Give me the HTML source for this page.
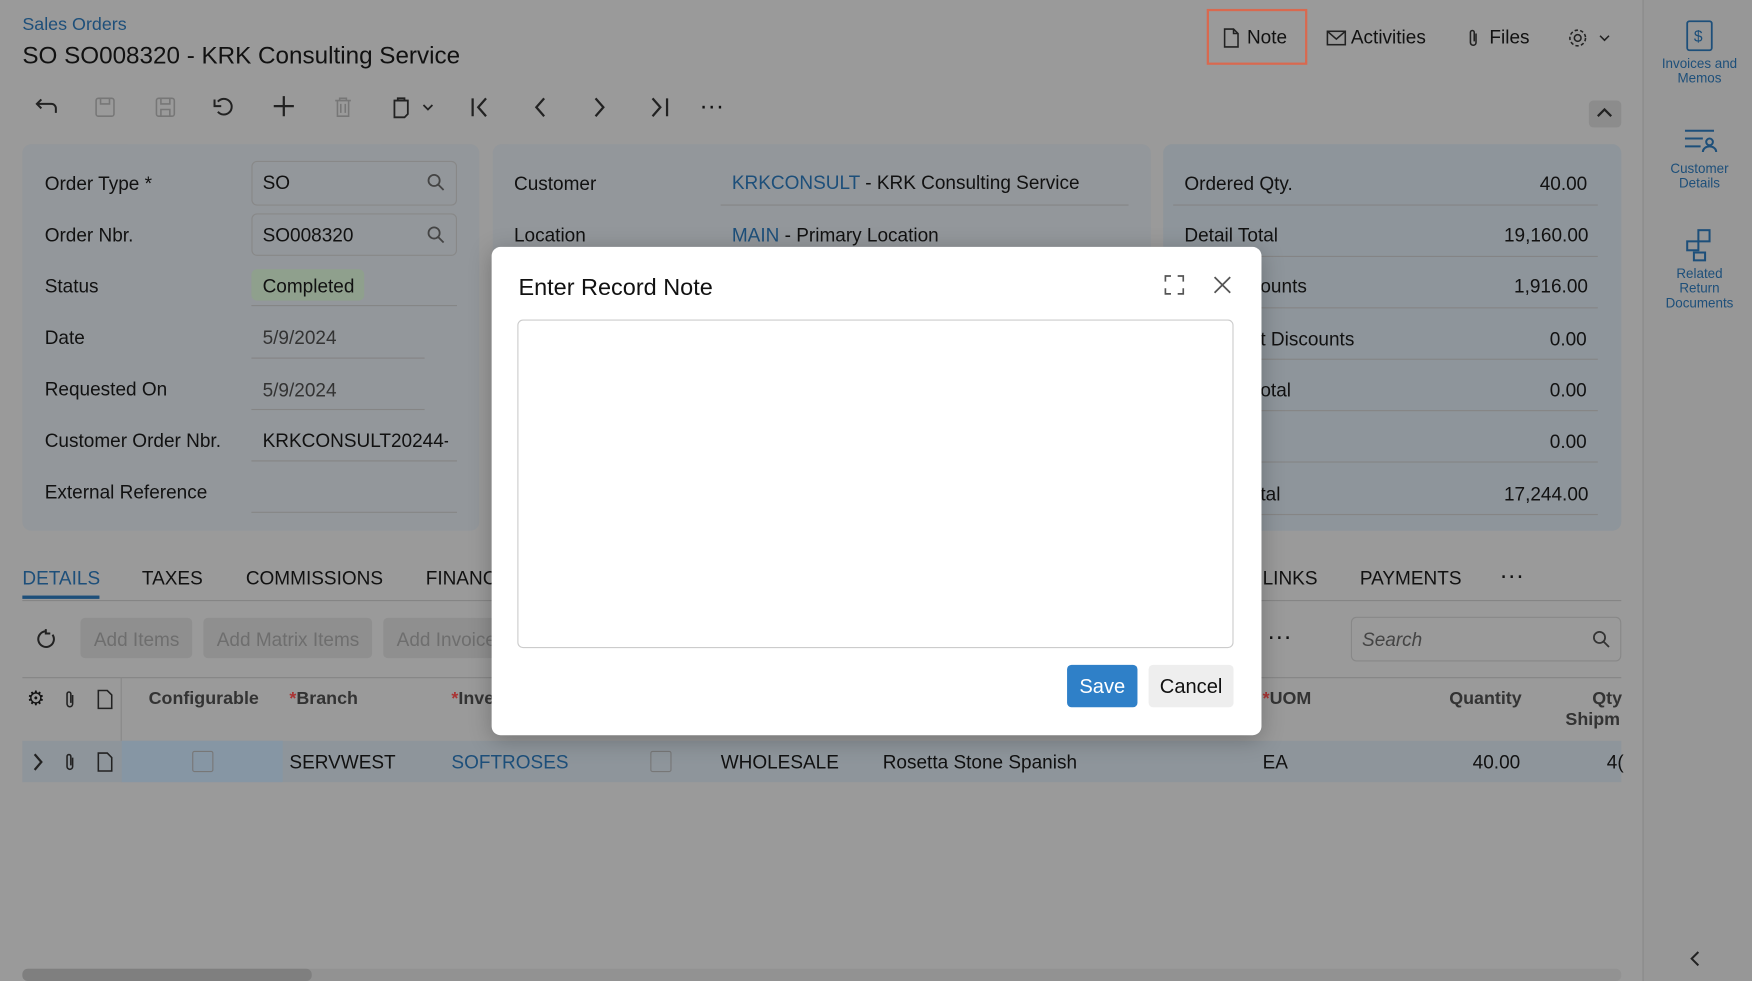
<!DOCTYPE html>
<html><head><meta charset="utf-8"><style>
*{box-sizing:border-box;margin:0;padding:0}
html,body{width:1752px;height:981px;overflow:hidden;background:#9a9a9a}
#w{position:absolute;left:0;top:0;width:1568px;height:878px;transform:scale(1.11735);transform-origin:0 0;font-family:"Liberation Sans",sans-serif;color:#111;font-size:17px}
.a{position:absolute;white-space:nowrap}
.link{color:#1d4f7a}
.panel{position:absolute;background:#93979b;border-radius:8px}
.line{position:absolute;height:1px;background:#858585}
.in{position:absolute;border:1px solid #888;border-radius:5px}
.g{color:#7e7e7e}
svg{position:absolute}
</style></head><body><div id="w">
<div class="a link" style="left:20px;top:14px;font-size:16px">Sales Orders</div>
<div class="a" style="left:20px;top:37px;font-size:21.7px">SO SO008320 - KRK Consulting Service</div>
<div class="a" style="left:1080px;top:8px;width:90px;height:50px;border:2px solid #d9694f"></div>
<div class="a" style="left:1116px;top:24px">Note</div>
<div class="a" style="left:1209px;top:24px">Activities</div>
<div class="a" style="left:1333px;top:24px">Files</div>
<svg style="left:1094px;top:25px" width="16" height="18" viewBox="0 0 16 18" fill="none" stroke="#222" stroke-width="1.4"><path d="M2 1h8l4 4v12H2z M10 1v4h4"/></svg>
<svg style="left:1187px;top:27px" width="18" height="14" fill="none" stroke="#222" stroke-width="1.4"><rect x="1" y="1" width="16" height="12"/><path d="M1 1l8 7 8-7"/></svg>
<svg style="left:1313px;top:25px" width="12" height="18" fill="none" stroke="#222" stroke-width="1.4"><path d="M8 5v8a2.5 2.5 0 0 1-5 0V4a1.7 1.7 0 0 1 3.4 0v8"/></svg>
<svg style="left:1404px;top:25px" width="40" height="18" fill="none" stroke="#222" stroke-width="1.4"><circle cx="8" cy="9" r="3"/><circle cx="8" cy="9" r="7" stroke-dasharray="3 2"/><path d="M28 7l4 4 4-4"/></svg>
<!-- toolbar -->
<svg style="left:31px;top:87px" width="22" height="16" fill="none" stroke="#222" stroke-width="1.8"><path d="M6 2L2 6l4 4M2 6h13a4 4 0 0 1 4 4v4"/></svg>
<svg style="left:84px;top:86px" width="20" height="20" fill="none" stroke="#777" stroke-width="1.4"><rect x="2" y="2" width="16" height="16" rx="2"/><path d="M6 2v5h8V2"/></svg>
<svg style="left:138px;top:86px" width="20" height="20" fill="none" stroke="#777" stroke-width="1.4"><rect x="2" y="2" width="16" height="16" rx="2"/><path d="M6 2v5h8V2M6 18v-6h8v6"/></svg>
<svg style="left:190px;top:85px" width="22" height="20" fill="none" stroke="#222" stroke-width="1.8"><path d="M5 15a7 7 0 1 0 0-9M2 4v6h6"/></svg>
<svg style="left:244px;top:85px" width="20" height="20" stroke="#222" stroke-width="2"><path d="M10 1v18M1 10h18"/></svg>
<svg style="left:298px;top:86px" width="18" height="20" fill="none" stroke="#777" stroke-width="1.4"><path d="M2 4h14M6 4V2h6v2M4 4v14h10V4M7 7v8M11 7v8"/></svg>
<svg style="left:350px;top:86px" width="40" height="20" fill="none" stroke="#222" stroke-width="1.6"><path d="M3 4h12v12l-3 3H3z M6 4V2h6v2"/><path d="M29 8l4 4 4-4"/></svg>
<svg style="left:420px;top:86px" width="20" height="20" fill="none" stroke="#222" stroke-width="2"><path d="M3 2v16M15 2l-7 8 7 8"/></svg>
<svg style="left:474px;top:86px" width="20" height="20" fill="none" stroke="#222" stroke-width="2"><path d="M13 2l-7 8 7 8"/></svg>
<svg style="left:527px;top:86px" width="20" height="20" fill="none" stroke="#222" stroke-width="2"><path d="M6 2l7 8-7 8"/></svg>
<svg style="left:580px;top:86px" width="20" height="20" fill="none" stroke="#222" stroke-width="2"><path d="M17 2v16M4 2l7 8-7 8"/></svg>
<div class="a" style="left:626px;top:82px;font-size:22px">···</div>
<div class="a" style="left:1422px;top:90px;width:29px;height:24px;background:#8c8c8c;border-radius:4px"></div>
<svg style="left:1429px;top:96px" width="14" height="10" fill="none" stroke="#222" stroke-width="2"><path d="M1 8l6-6 6 6"/></svg>
<!-- panels -->
<div class="panel" style="left:20px;top:129px;width:409px;height:346px"></div>
<div class="panel" style="left:441px;top:129px;width:589px;height:346px"></div>
<div class="panel" style="left:1041px;top:129px;width:410px;height:346px;background:#8e959b"></div>
<div class="a" style="left:40px;top:155px">Order Type *</div>
<div class="a" style="left:40px;top:201px">Order Nbr.</div>
<div class="a" style="left:40px;top:247px">Status</div>
<div class="a" style="left:40px;top:293px">Date</div>
<div class="a" style="left:40px;top:339px">Requested On</div>
<div class="a" style="left:40px;top:385px">Customer Order Nbr.</div>
<div class="a" style="left:40px;top:431px">External Reference</div>
<div class="in" style="left:225px;top:144px;width:184px;height:40px"></div>
<div class="in" style="left:225px;top:191px;width:184px;height:38px"></div>
<div class="a" style="left:235px;top:154px">SO</div>
<div class="a" style="left:235px;top:201px">SO008320</div>
<svg style="left:382px;top:155px" width="16" height="16" fill="none" stroke="#444" stroke-width="1.6"><circle cx="6.5" cy="6.5" r="5"/><path d="M10 10l5 5"/></svg>
<svg style="left:382px;top:202px" width="16" height="16" fill="none" stroke="#444" stroke-width="1.6"><circle cx="6.5" cy="6.5" r="5"/><path d="M10 10l5 5"/></svg>
<div class="a" style="left:225px;top:241px;width:101px;height:28px;background:#8fa08d;border-radius:5px"></div>
<div class="a" style="left:235px;top:247px">Completed</div>
<div class="line" style="left:225px;top:273px;width:184px"></div>
<div class="a" style="left:235px;top:293px;color:#333">5/9/2024</div>
<div class="line" style="left:225px;top:320px;width:155px"></div>
<div class="a" style="left:235px;top:340px;color:#333">5/9/2024</div>
<div class="line" style="left:225px;top:366px;width:155px"></div>
<div class="a" style="left:235px;top:385px;width:166px;overflow:hidden">KRKCONSULT20244-</div>
<div class="line" style="left:225px;top:412px;width:184px"></div>
<div class="line" style="left:225px;top:458px;width:184px"></div>
<div class="a" style="left:460px;top:155px">Customer</div>
<div class="a" style="left:460px;top:201px">Location</div>
<div class="a" style="left:655px;top:154px"><span class="link">KRKCONSULT</span> - KRK Consulting Service</div>
<div class="a" style="left:655px;top:201px"><span class="link">MAIN</span> - Primary Location</div>
<div class="line" style="left:645px;top:183px;width:365px"></div>
<div class="a" style="left:1060px;top:155px">Ordered Qty.</div><div class="a" style="left:1378px;top:155px">40.00</div>
<div class="a" style="left:1060px;top:201px">Detail Total</div><div class="a" style="left:1346px;top:201px">19,160.00</div>
<div class="a" style="left:1128px;top:247px">ounts</div><div class="a" style="left:1355px;top:247px">1,916.00</div>
<div class="a" style="left:1128px;top:294px">t Discounts</div><div class="a" style="left:1387px;top:294px">0.00</div>
<div class="a" style="left:1128px;top:340px">otal</div><div class="a" style="left:1387px;top:340px">0.00</div>
<div class="a" style="left:1387px;top:386px">0.00</div>
<div class="a" style="left:1128px;top:433px">tal</div><div class="a" style="left:1346px;top:433px">17,244.00</div>
<div class="line" style="left:1050px;top:183px;width:380px"></div><div class="line" style="left:1050px;top:229px;width:380px"></div>
<div class="line" style="left:1128px;top:275px;width:302px"></div><div class="line" style="left:1128px;top:321px;width:302px"></div>
<div class="line" style="left:1128px;top:367px;width:302px"></div><div class="line" style="left:1128px;top:413px;width:302px"></div><div class="line" style="left:1128px;top:460px;width:302px"></div>
<!-- tabs -->
<div class="a link" style="left:20px;top:508px">DETAILS</div>
<div class="a" style="left:20px;top:533px;width:69px;height:3px;background:#1d4f7a"></div>
<div class="a" style="left:127px;top:508px">TAXES</div>
<div class="a" style="left:220px;top:508px">COMMISSIONS</div>
<div class="a" style="left:381px;top:508px">FINANC</div>
<div class="a" style="left:1130px;top:508px">LINKS</div>
<div class="a" style="left:1217px;top:508px">PAYMENTS</div>
<div class="a" style="left:1342px;top:502px;font-size:22px">···</div>
<div class="line" style="left:20px;top:537px;width:1431px"></div>
<svg style="left:32px;top:562px" width="20" height="20" fill="none" stroke="#222" stroke-width="1.8"><path d="M15 6a7 7 0 1 1-6-3M9 1v4h4"/></svg>
<div class="a" style="left:72px;top:553px;width:100px;height:36px;background:#8f8f8f;border-radius:4px"></div>
<div class="a" style="left:182px;top:553px;width:151px;height:36px;background:#8f8f8f;border-radius:4px"></div>
<div class="a" style="left:343px;top:553px;width:100px;height:36px;background:#8f8f8f;border-radius:4px"></div>
<div class="a" style="left:84px;top:563px;color:#6e6e6e">Add Items</div>
<div class="a" style="left:194px;top:563px;color:#6e6e6e">Add Matrix Items</div>
<div class="a" style="left:355px;top:563px;color:#6e6e6e">Add Invoice</div>
<div class="a" style="left:1134px;top:557px;font-size:22px">···</div>
<div class="in" style="left:1209px;top:552px;width:242px;height:40px"></div>
<div class="a" style="left:1219px;top:563px;font-style:italic;color:#444">Search</div>
<svg style="left:1425px;top:564px" width="16" height="16" fill="none" stroke="#333" stroke-width="1.6"><circle cx="6.5" cy="6.5" r="5"/><path d="M10 10l5 5"/></svg>
<!-- grid -->
<div class="line" style="left:20px;top:606px;width:1431px"></div>
<div class="a" style="left:24px;top:615px;font-size:18px">⚙</div>
<svg style="left:57px;top:617px" width="12" height="18" fill="none" stroke="#222" stroke-width="1.4"><path d="M8 5v8a2.5 2.5 0 0 1-5 0V4a1.7 1.7 0 0 1 3.4 0v8"/></svg>
<svg style="left:86px;top:617px" width="16" height="18" fill="none" stroke="#222" stroke-width="1.4"><path d="M2 1h8l4 4v12H2z"/></svg>
<div class="a" style="left:108px;top:606px;width:1px;height:94px;background:#888"></div>
<div class="a" style="left:133px;top:617px;color:#333;font-weight:bold;font-size:16px">Configurable</div>
<div class="a" style="left:259px;top:617px;color:#333;font-weight:bold;font-size:16px"><span style="color:#a33">*</span>Branch</div>
<div class="a" style="left:404px;top:617px;color:#333;font-weight:bold;font-size:16px"><span style="color:#a33">*</span>Inve</div>
<div class="a" style="left:1130px;top:617px;color:#333;font-weight:bold;font-size:16px"><span style="color:#a33">*</span>UOM</div>
<div class="a" style="left:1297px;top:617px;color:#333;font-weight:bold;font-size:16px">Quantity</div>
<div class="a" style="left:1425px;top:617px;color:#333;font-weight:bold;font-size:16px">Qty</div>
<div class="a" style="left:1401px;top:636px;color:#333;font-weight:bold;font-size:16px">Shipm</div>
<div class="a" style="left:20px;top:663px;width:1431px;height:37px;background:#8e959b"></div>
<div class="a" style="left:109px;top:663px;width:144px;height:37px;background:#8696a4"></div>
<svg style="left:28px;top:673px" width="12" height="18" fill="none" stroke="#222" stroke-width="2"><path d="M3 2l6 7-6 7"/></svg>
<svg style="left:57px;top:673px" width="12" height="18" fill="none" stroke="#222" stroke-width="1.4"><path d="M8 5v8a2.5 2.5 0 0 1-5 0V4a1.7 1.7 0 0 1 3.4 0v8"/></svg>
<svg style="left:86px;top:673px" width="16" height="18" fill="none" stroke="#222" stroke-width="1.4"><path d="M2 1h8l4 4v12H2z"/></svg>
<div class="a" style="left:172px;top:672px;width:19px;height:19px;border:1px solid #777;border-radius:2px"></div>
<div class="a" style="left:582px;top:672px;width:19px;height:19px;border:1px solid #777;border-radius:2px"></div>
<div class="a" style="left:259px;top:673px">SERVWEST</div>
<div class="a link" style="left:404px;top:673px">SOFTROSES</div>
<div class="a" style="left:645px;top:673px">WHOLESALE</div>
<div class="a" style="left:790px;top:673px">Rosetta Stone Spanish</div>
<div class="a" style="left:1130px;top:673px">EA</div>
<div class="a" style="left:1318px;top:673px">40.00</div>
<div class="a" style="left:1438px;top:673px">4(</div>
<div class="a" style="left:20px;top:867px;width:1431px;height:11px;background:#929292;border-radius:5px"></div>
<div class="a" style="left:20px;top:867px;width:259px;height:11px;background:#7f7f7f;border-radius:5px"></div>
<!-- right sidebar -->
<div class="a" style="left:1470px;top:0;width:98px;height:878px;background:#979797;border-left:1px solid #888"></div>
<svg style="left:1508px;top:18px" width="26" height="28" fill="none" stroke="#1d4f7a" stroke-width="1.6"><rect x="2" y="1" width="22" height="26" rx="2"/><text x="8" y="19" font-size="14" fill="#1d4f7a" stroke="none" font-family="Liberation Sans">$</text></svg>
<div class="a link" style="left:1480px;top:51px;width:82px;text-align:center;font-size:12px;white-space:normal;line-height:13px">Invoices and Memos</div>
<svg style="left:1507px;top:115px" width="30" height="22" stroke="#1d4f7a" stroke-width="1.8" fill="none"><path d="M1 2h26M1 9h16M1 16h14"/><circle cx="23" cy="12" r="3"/><path d="M17 21a6 5 0 0 1 12 0"/></svg>
<div class="a link" style="left:1480px;top:145px;width:82px;text-align:center;font-size:12px;white-space:normal;line-height:13px">Customer Details</div>
<svg style="left:1508px;top:204px" width="28" height="30" fill="none" stroke="#1d4f7a" stroke-width="1.8"><rect x="12" y="2" width="10" height="10"/><rect x="2" y="12" width="10" height="8"/><rect x="8" y="22" width="10" height="7"/></svg>
<div class="a link" style="left:1488px;top:239px;width:66px;text-align:center;font-size:12px;white-space:normal;line-height:13px">Related Return Documents</div>
<svg style="left:1511px;top:850px" width="12" height="16" fill="none" stroke="#222" stroke-width="1.8"><path d="M9 2l-6 6 6 6"/></svg>
<!-- dialog -->
<div class="a" style="left:440px;top:221px;width:689px;height:437px;background:#fff;border-radius:8px;box-shadow:0 4px 20px rgba(0,0,0,.25)"></div>
<div class="a" style="left:464px;top:246px;font-size:21px">Enter Record Note</div>
<svg style="left:1042px;top:246px" width="18" height="18" fill="none" stroke="#555" stroke-width="1.5"><path d="M1 6V1h5M12 1h5v5M17 12v5h-5M6 17H1v-5"/></svg>
<svg style="left:1086px;top:247px" width="16" height="16" stroke="#555" stroke-width="1.6"><path d="M1 1l14 14M15 1L1 15"/></svg>
<div class="a" style="left:463px;top:286px;width:641px;height:294px;border:1px solid #ccc;border-radius:5px"></div>
<div class="a" style="left:955px;top:595px;width:63px;height:38px;background:#2f80c8;border-radius:4px;color:#fff;font-size:18px;text-align:center;line-height:38px">Save</div>
<div class="a" style="left:1028px;top:595px;width:76px;height:38px;background:#eee;border-radius:4px;font-size:18px;text-align:center;line-height:38px">Cancel</div>
</div></body></html>
